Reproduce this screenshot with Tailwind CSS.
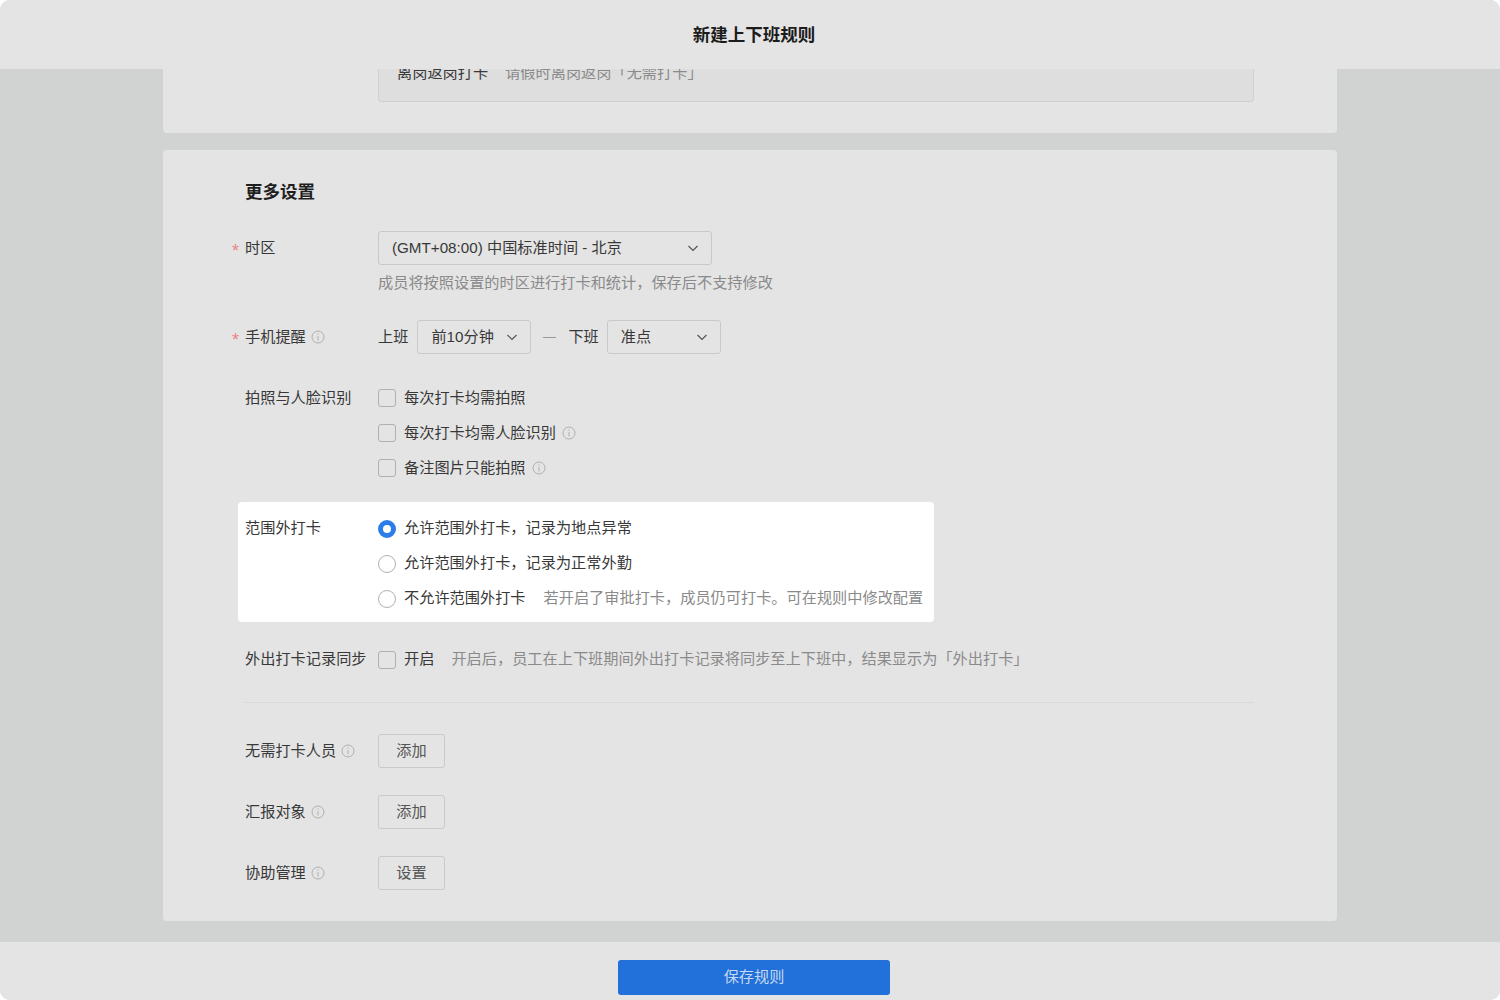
<!DOCTYPE html>
<html lang="zh-CN">
<head>
  <meta charset="UTF-8" />
  <title>新建上下班规则</title>
  <script src="https://cdn.jsdelivr.net/npm/@tailwindcss/browser@4"></script>
</head>
<body class="bg-white font-['Liberation_Sans','Noto_Sans_CJK_SC',sans-serif] text-[15.2px] text-[#383838]">
  <div class="h-[1000px] flex flex-col bg-[#d1d3d2] rounded-[10px] overflow-hidden">

    <!-- Header -->
    <header class="h-[69px] shrink-0 bg-[#e4e4e4] flex items-center justify-center pl-2 pt-[1px] relative z-10">
      <h1 class="text-[17.5px] leading-6 font-bold text-[#1c1c1c]">新建上下班规则</h1>
    </header>

    <!-- Scroll area -->
    <main class="h-[873px] shrink-0 overflow-hidden px-[163px]">
      <section class="h-[64px] bg-[#e4e4e4] rounded-b-[4px] pl-[215px] pr-[83px] overflow-hidden">
        <div class="h-[33px] bg-[#dedede] border border-[#cfcfcf] rounded-b-[4px] border-t-0 pl-[18px] relative">
          <div class="absolute left-[18px] top-[-6px] flex gap-[17px] leading-5 whitespace-nowrap">
            <span>离岗返岗打卡</span>
            <span class="text-[#8a8a8a]">请假时离岗返岗「无需打卡」</span>
          </div>
        </div>
      </section>

      <section class="mt-[17px] h-[771px] bg-[#e4e4e4] rounded-[4px] pt-[30px] pl-[82px] pr-[83px]">
        <h2 class="text-[17.5px] leading-6 font-bold text-[#1f1f1f]">更多设置</h2>

        <!-- Timezone -->
        <div class="mt-[27px] flex">
          <label class="w-[133px] shrink-0 h-[34px] flex items-center relative">
            <span class="absolute left-[-13px] top-[6px] text-[#ec8484] text-lg">*</span>时区
          </label>
          <div>
            <div class="w-[334px] h-[34px] border border-[#c9c9c9] rounded-[3px] flex items-center justify-between pl-[13px] pr-[12px]">
              <span>(GMT+08:00) 中国标准时间 - 北京</span>
              <svg class="w-3 h-3 text-[#555]" viewBox="0 0 12 12" fill="none" stroke="currentColor" stroke-width="1.2"><path d="M1.5 4l4.500 4.500L10.500 4" /></svg>
            </div>
            <p class="mt-[8px] leading-5 text-[#8a8a8a]">成员将按照设置的时区进行打卡和统计，保存后不支持修改</p>
          </div>
        </div>

        <!-- Reminder -->
        <div class="mt-[27px] flex">
          <label class="w-[133px] shrink-0 h-[34px] flex items-center gap-[5px] relative">
            <span class="absolute left-[-13px] top-[6px] text-[#ec8484] text-lg">*</span>手机提醒
            <svg class="w-[14px] h-[14px] text-[#b0b0b0]" viewBox="0 0 14 14" fill="none" stroke="currentColor"><circle cx="7" cy="7" r="6" /><path d="M7 6v4.500M7 3.400v1.300" /></svg>
          </label>
          <div class="flex items-center">
            <span>上班</span>
            <div class="ml-[9px] w-[114px] h-[34px] border border-[#c9c9c9] rounded-[3px] flex items-center justify-between pl-[13px] pr-[12px]">
              <span>前10分钟</span>
              <svg class="w-3 h-3 text-[#555]" viewBox="0 0 12 12" fill="none" stroke="currentColor" stroke-width="1.2"><path d="M1.5 4l4.500 4.500L10.500 4" /></svg>
            </div>
            <span class="ml-3 w-[13px] h-px bg-[#9a9a9a]"></span>
            <span class="ml-[12px]">下班</span>
            <div class="ml-2 w-[114px] h-[34px] border border-[#c9c9c9] rounded-[3px] flex items-center justify-between pl-[13px] pr-[12px]">
              <span>准点</span>
              <svg class="w-3 h-3 text-[#555]" viewBox="0 0 12 12" fill="none" stroke="currentColor" stroke-width="1.2"><path d="M1.5 4l4.500 4.500L10.500 4" /></svg>
            </div>
          </div>
        </div>

        <!-- Photo and face -->
        <div class="mt-[26px] flex">
          <label class="w-[133px] shrink-0 h-[35px] pt-[2px] flex items-center">拍照与人脸识别</label>
          <div>
            <div class="h-[35px] flex items-center gap-2">
              <span class="w-[18px] h-[18px] border border-[#b0b0b0] rounded-[3px]"></span>
              <span class="pt-[2px]">每次打卡均需拍照</span>
            </div>
            <div class="h-[35px] flex items-center gap-2">
              <span class="w-[18px] h-[18px] border border-[#b0b0b0] rounded-[3px]"></span>
              <span class="pt-[2px]">每次打卡均需人脸识别</span>
              <svg class="-ml-[2px] w-[14px] h-[14px] text-[#b0b0b0]" viewBox="0 0 14 14" fill="none" stroke="currentColor"><circle cx="7" cy="7" r="6" /><path d="M7 6v4.500M7 3.400v1.300" /></svg>
            </div>
            <div class="h-[35px] flex items-center gap-2">
              <span class="w-[18px] h-[18px] border border-[#b0b0b0] rounded-[3px]"></span>
              <span class="pt-[2px]">备注图片只能拍照</span>
              <svg class="-ml-[2px] w-[14px] h-[14px] text-[#b0b0b0]" viewBox="0 0 14 14" fill="none" stroke="currentColor"><circle cx="7" cy="7" r="6" /><path d="M7 6v4.500M7 3.400v1.300" /></svg>
            </div>
          </div>
        </div>

        <!-- Out of range -->
        <div class="mt-[17px] -ml-[7px] w-[696px] h-[120px] pl-[7px] pt-[9px] bg-white rounded-[4px] flex">
          <label class="w-[133px] shrink-0 h-[35px] flex items-center">范围外打卡</label>
          <div>
            <div class="h-[35px] flex items-center gap-2">
              <span class="w-[18px] h-[18px] rounded-full border-[5px] border-[#2b7de9] bg-white"></span>
              <span>允许范围外打卡，记录为地点异常</span>
            </div>
            <div class="h-[35px] flex items-center gap-2">
              <span class="w-[18px] h-[18px] rounded-full border-[1.5px] border-[#b0b0b0]"></span>
              <span>允许范围外打卡，记录为正常外勤</span>
            </div>
            <div class="h-[35px] flex items-center gap-2 whitespace-nowrap">
              <span class="w-[18px] h-[18px] rounded-full border-[1.5px] border-[#b0b0b0]"></span>
              <span>不允许范围外打卡</span>
              <span class="ml-[10px] text-[#8a8a8a]">若开启了审批打卡，成员仍可打卡。可在规则中修改配置</span>
            </div>
          </div>
        </div>

        <!-- Outing sync -->
        <div class="mt-[20px] h-[35px] flex items-center">
          <label class="w-[133px] shrink-0 whitespace-nowrap">外出打卡记录同步</label>
          <span class="w-[18px] h-[18px] border border-[#b0b0b0] rounded-[3px]"></span>
          <span class="ml-2">开启</span>
          <span class="ml-[17px] text-[#8a8a8a]">开启后，员工在上下班期间外出打卡记录将同步至上下班中，结果显示为「外出打卡」</span>
        </div>

        <div class="mt-[25px] h-px bg-[#d8d8d8]"></div>

        <!-- People -->
        <div class="mt-[31px] flex items-center">
          <label class="w-[133px] shrink-0 flex items-center gap-[5px]">无需打卡人员
            <svg class="w-[14px] h-[14px] text-[#b0b0b0]" viewBox="0 0 14 14" fill="none" stroke="currentColor"><circle cx="7" cy="7" r="6" /><path d="M7 6v4.500M7 3.400v1.300" /></svg>
          </label>
          <button class="w-[67px] h-[34px] border border-[#c9c9c9] rounded-[3px] text-[#555]">添加</button>
        </div>
        <div class="mt-[27px] flex items-center">
          <label class="w-[133px] shrink-0 flex items-center gap-[5px]">汇报对象
            <svg class="w-[14px] h-[14px] text-[#b0b0b0]" viewBox="0 0 14 14" fill="none" stroke="currentColor"><circle cx="7" cy="7" r="6" /><path d="M7 6v4.500M7 3.400v1.300" /></svg>
          </label>
          <button class="w-[67px] h-[34px] border border-[#c9c9c9] rounded-[3px] text-[#555]">添加</button>
        </div>
        <div class="mt-[27px] flex items-center">
          <label class="w-[133px] shrink-0 flex items-center gap-[5px]">协助管理
            <svg class="w-[14px] h-[14px] text-[#b0b0b0]" viewBox="0 0 14 14" fill="none" stroke="currentColor"><circle cx="7" cy="7" r="6" /><path d="M7 6v4.500M7 3.400v1.300" /></svg>
          </label>
          <button class="w-[67px] h-[34px] border border-[#c9c9c9] rounded-[3px] text-[#555]">设置</button>
        </div>
      </section>
    </main>

    <!-- Footer -->
    <footer class="h-[58px] shrink-0 bg-[#e4e4e4] flex justify-center pt-[18px] pl-2">
      <button class="w-[272px] h-[35px] bg-[#2270d9] rounded-[3px] text-[#c5d8f2]">保存规则</button>
    </footer>
  </div>
</body>
</html>
